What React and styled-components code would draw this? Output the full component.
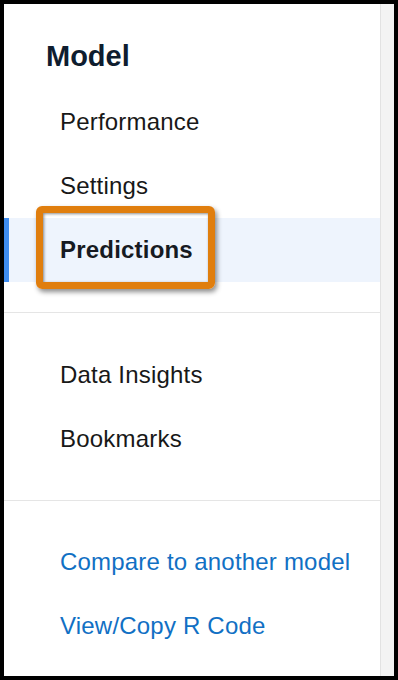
import React from 'react';
import styled, { createGlobalStyle, css } from 'styled-components';

const GlobalStyle = createGlobalStyle`
  html, body {
    margin: 0;
    padding: 0;
    background: #000000;
  }
  * {
    box-sizing: border-box;
  }
`;

const Screen = styled.div`
  width: 398px;
  height: 680px;
  padding: 4px;
  display: flex;
  background: #000000;
  font-family: 'Liberation Sans', Arial, sans-serif;
`;

const Sidebar = styled.nav`
  width: 377px;
  height: 100%;
  background: #ffffff;
  border-right: 1px solid #e2e2e2;
  padding-top: 35px;
  display: flex;
  flex-direction: column;
`;

const Gutter = styled.div`
  flex: 1;
  height: 100%;
  background: #f3f3f3;
`;

const Heading = styled.h2`
  margin: 0 0 17px;
  padding-left: 42px;
  font-size: 29px;
  line-height: 34px;
  font-weight: 700;
  color: #0f1d2f;
`;

const Section = styled.ul`
  list-style: none;
  margin: 0;
  padding: ${({ $top = 30, $bottom = 30 }) => `${$top}px 0 ${$bottom}px`};
  ${({ $divider }) =>
    $divider &&
    css`
      border-top: 1px solid #e5e5e5;
    `}
`;

const Item = styled.li`
  position: relative;
  height: 64px;
  line-height: 64px;
  padding-left: 56px;
  font-size: 24px;
  letter-spacing: 0.2px;
  color: #181818;
  ${({ $active }) =>
    $active &&
    css`
      background: #eef4fd;
      font-weight: 700;
      color: #161a22;
      &::before {
        content: '';
        position: absolute;
        left: 0;
        top: 0;
        bottom: 0;
        width: 5px;
        background: #3f8df0;
      }
    `}
`;

const Link = styled.a`
  color: #1170c4;
  text-decoration: none;
`;

const Highlight = styled.span`
  position: absolute;
  left: 32px;
  top: -12px;
  width: 179px;
  height: 83px;
  border: 7px solid #e07e0e;
  border-radius: 6px;
  box-shadow: 2px 3px 5px rgba(0, 0, 0, 0.45), inset 1px 1px 3px rgba(0, 0, 0, 0.45);
  pointer-events: none;
`;

const modelItems = ['Performance', 'Settings', 'Predictions'];
const insightItems = ['Data Insights', 'Bookmarks'];
const links = ['Compare to another model', 'View/Copy R Code'];

export default function App() {
  return (
    <>
      <GlobalStyle />
      <Screen>
        <Sidebar>
          <Heading>Model</Heading>
          <Section $top={0}>
            {modelItems.map(label => (
              <Item key={label} $active={label === 'Predictions'}>
                {label}
                {label === 'Predictions' && <Highlight />}
              </Item>
            ))}
          </Section>
          <Section $divider $bottom={29}>
            {insightItems.map(label => (
              <Item key={label}>{label}</Item>
            ))}
          </Section>
          <Section $divider $top={29}>
            {links.map(label => (
              <Item key={label}>
                <Link href="#">{label}</Link>
              </Item>
            ))}
          </Section>
        </Sidebar>
        <Gutter />
      </Screen>
    </>
  );
}
